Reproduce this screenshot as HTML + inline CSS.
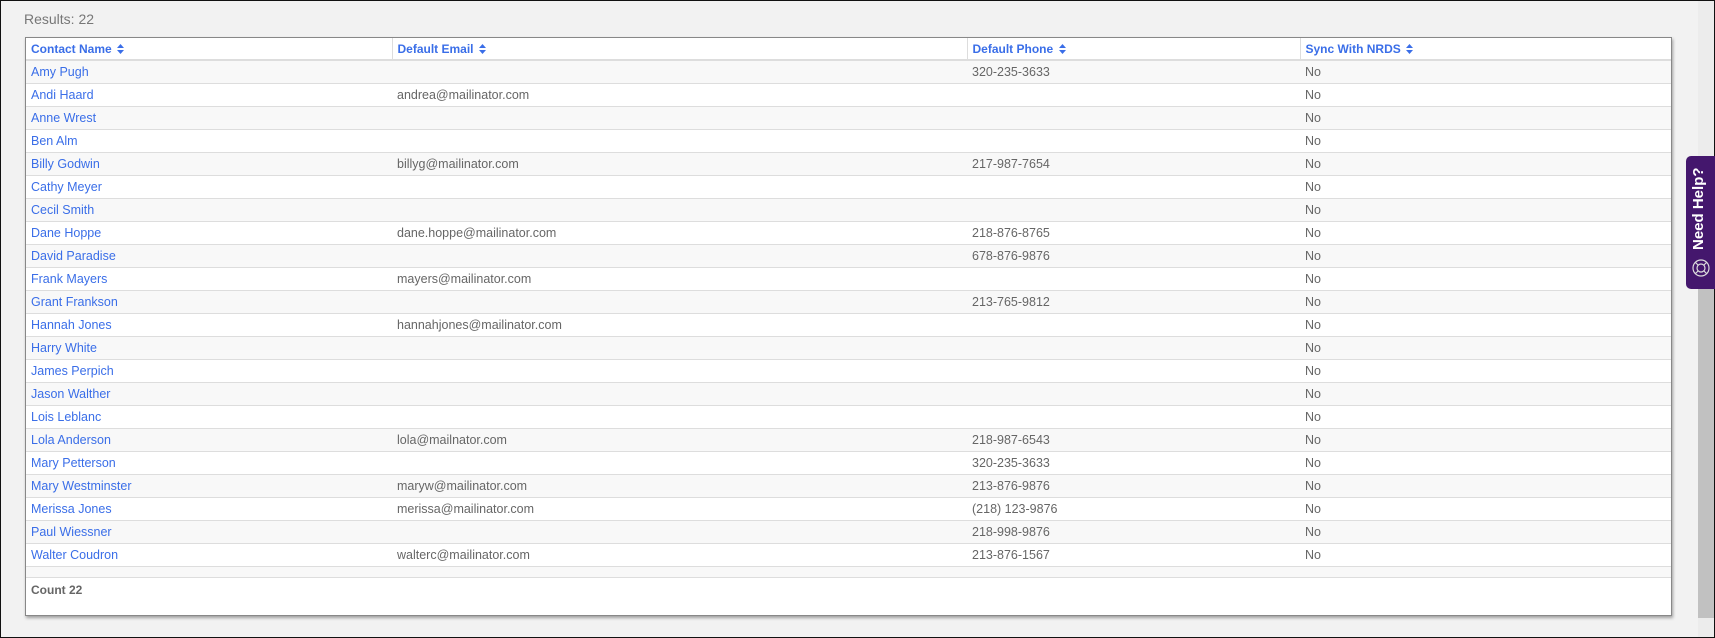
<!DOCTYPE html>
<html><head><style>
*{margin:0;padding:0;box-sizing:border-box}
html,body{width:1715px;height:638px;overflow:hidden}
body{background:#f2f2f2;font-family:"Liberation Sans",Arial,sans-serif;font-size:12.5px;color:#666;position:relative;border:1px solid #111}
.res{position:absolute;left:23px;top:10px;font-size:14px;color:#777}
.box{position:absolute;left:24px;top:36px;width:1647px;height:579px;background:#fff;border:1px solid #888;box-shadow:1px 2px 3px rgba(0,0,0,.35)}
table{border-collapse:collapse;width:100%;table-layout:fixed}
th{height:22px;text-align:left;color:#3a6ee8;font-weight:bold;padding-left:5px;border-right:1px solid #ddd;border-bottom:2px solid #ddd;font-size:12px}
th:last-child{border-right:none}
td{height:23px;padding-left:5px;border-bottom:1px solid #ddd;white-space:nowrap}
tr:nth-child(even) td{background:#f8f8f8}
td:first-child{color:#3a6ee8}
th svg{vertical-align:-1px;margin-left:2px}
.count{position:absolute;left:0;top:539px;width:100%;border-top:1px solid #ddd;padding:5px 5px;font-weight:bold;color:#666;font-size:12px}
.empty{position:absolute;left:0;top:529px;width:100%;height:11px;background:#f8f8f8}
.track{position:absolute;left:1697px;top:0;width:16px;height:636px;background:#ececec}
.thumb{position:absolute;left:1697px;top:285px;width:16px;height:332px;background:#c1c1c1}
.help{position:absolute;left:1685px;top:155px;width:30px;height:133px;background:#44176d;border-radius:5px 0 0 5px;color:#fff}
.help span{position:absolute;left:4px;top:8px;writing-mode:vertical-rl;transform:rotate(180deg);font-weight:bold;font-size:15px;height:90px;text-align:center}
</style></head><body>
<div class="res">Results: 22</div>
<div class="track"></div><div class="thumb"></div>
<div class="box">
<table>
<colgroup><col style="width:366px"><col style="width:575px"><col style="width:333px"><col></colgroup>
<tr><th>Contact Name <svg width="7" height="10" viewBox="0 0 7 10"><path d="M0 4L3.5 0 7 4zM0 6L3.5 10 7 6z" fill="#3a6ee8"/></svg></th><th>Default Email <svg width="7" height="10" viewBox="0 0 7 10"><path d="M0 4L3.5 0 7 4zM0 6L3.5 10 7 6z" fill="#3a6ee8"/></svg></th><th>Default Phone <svg width="7" height="10" viewBox="0 0 7 10"><path d="M0 4L3.5 0 7 4zM0 6L3.5 10 7 6z" fill="#3a6ee8"/></svg></th><th>Sync With NRDS <svg width="7" height="10" viewBox="0 0 7 10"><path d="M0 4L3.5 0 7 4zM0 6L3.5 10 7 6z" fill="#3a6ee8"/></svg></th></tr>
<tr><td>Amy Pugh</td><td></td><td>320-235-3633</td><td>No</td></tr>
<tr><td>Andi Haard</td><td>andrea@mailinator.com</td><td></td><td>No</td></tr>
<tr><td>Anne Wrest</td><td></td><td></td><td>No</td></tr>
<tr><td>Ben Alm</td><td></td><td></td><td>No</td></tr>
<tr><td>Billy Godwin</td><td>billyg@mailinator.com</td><td>217-987-7654</td><td>No</td></tr>
<tr><td>Cathy Meyer</td><td></td><td></td><td>No</td></tr>
<tr><td>Cecil Smith</td><td></td><td></td><td>No</td></tr>
<tr><td>Dane Hoppe</td><td>dane.hoppe@mailinator.com</td><td>218-876-8765</td><td>No</td></tr>
<tr><td>David Paradise</td><td></td><td>678-876-9876</td><td>No</td></tr>
<tr><td>Frank Mayers</td><td>mayers@mailinator.com</td><td></td><td>No</td></tr>
<tr><td>Grant Frankson</td><td></td><td>213-765-9812</td><td>No</td></tr>
<tr><td>Hannah Jones</td><td>hannahjones@mailinator.com</td><td></td><td>No</td></tr>
<tr><td>Harry White</td><td></td><td></td><td>No</td></tr>
<tr><td>James Perpich</td><td></td><td></td><td>No</td></tr>
<tr><td>Jason Walther</td><td></td><td></td><td>No</td></tr>
<tr><td>Lois Leblanc</td><td></td><td></td><td>No</td></tr>
<tr><td>Lola Anderson</td><td>lola@mailnator.com</td><td>218-987-6543</td><td>No</td></tr>
<tr><td>Mary Petterson</td><td></td><td>320-235-3633</td><td>No</td></tr>
<tr><td>Mary Westminster</td><td>maryw@mailinator.com</td><td>213-876-9876</td><td>No</td></tr>
<tr><td>Merissa Jones</td><td>merissa@mailinator.com</td><td>(218) 123-9876</td><td>No</td></tr>
<tr><td>Paul Wiessner</td><td></td><td>218-998-9876</td><td>No</td></tr>
<tr><td>Walter Coudron</td><td>walterc@mailinator.com</td><td>213-876-1567</td><td>No</td></tr>
</table>
<div class="empty"></div>
<div class="count">Count 22</div>
</div>
<div class="help"><span>Need Help?</span>
<svg style="position:absolute;left:6px;top:103px" width="18" height="18" viewBox="0 0 18 18" fill="none" stroke="#ddd" stroke-width="1.2"><circle cx="9" cy="9" r="8"/><circle cx="9" cy="9" r="4"/><path d="M6 6L3.5 3.5M12 6l2.5-2.5M6 12l-2.5 2.5M12 12l2.5 2.5"/></svg>
</div>
</body></html>
